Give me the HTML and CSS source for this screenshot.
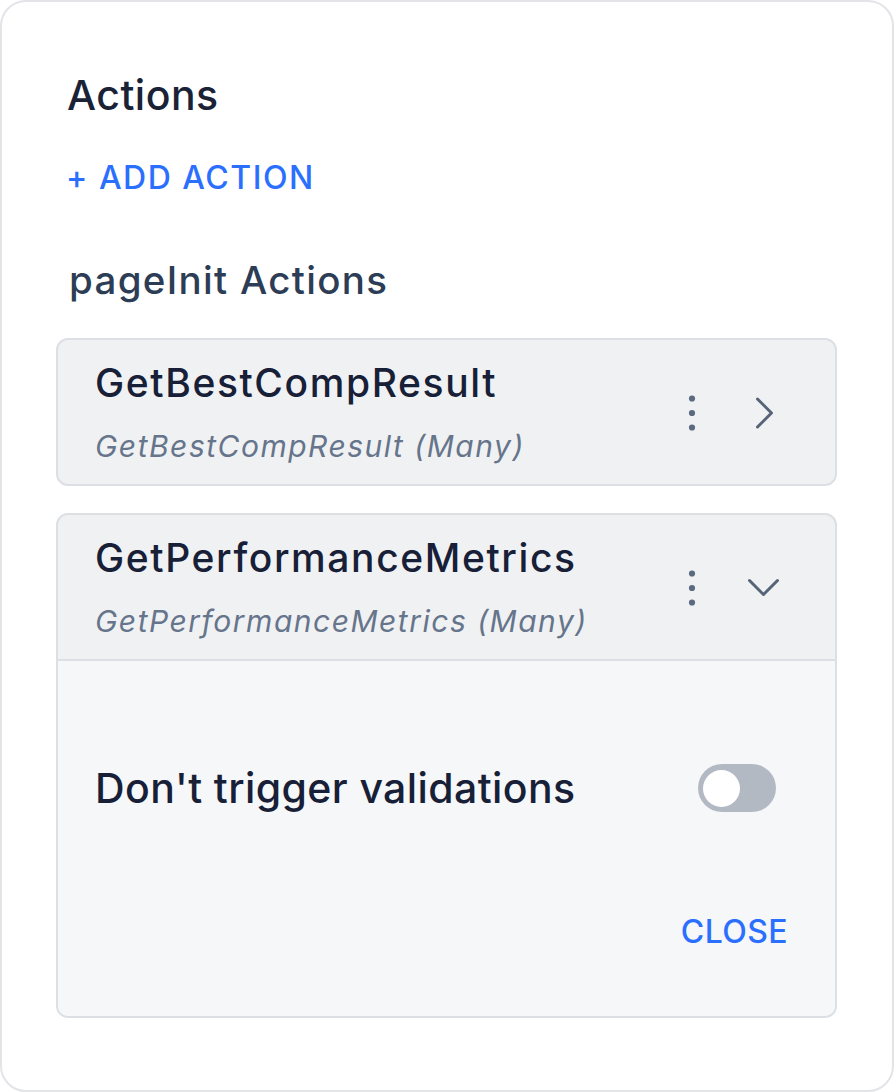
FILE: index.html
```html
<!DOCTYPE html>
<html>
<head>
<meta charset="utf-8">
<link rel="stylesheet" href="styles.css">
</head>
<body>
<div class="panel">
  <h1 class="title">Actions</h1>
  <div class="add-action">+ ADD ACTION</div>
  <h2 class="section">pageInit Actions</h2>

  <div class="card">
    <div class="card-head">
      <div class="card-text">
        <div class="card-title">GetBestCompResult</div>
        <div class="card-sub">GetBestCompResult (Many)</div>
      </div>
      <div class="card-actions">
        <svg class="kebab" width="20" height="40" viewBox="0 0 20 40"><circle cx="10" cy="5.5" r="3.1"/><circle cx="10" cy="20" r="3.1"/><circle cx="10" cy="34.5" r="3.1"/></svg>
        <svg class="chev" width="40" height="40" viewBox="0 0 40 40"><path d="M13.5 6 L27.5 20 L13.5 34"/></svg>
      </div>
    </div>
  </div>

  <div class="card open">
    <div class="card-head">
      <div class="card-text">
        <div class="card-title">GetPerformanceMetrics</div>
        <div class="card-sub">GetPerformanceMetrics (Many)</div>
      </div>
      <div class="card-actions">
        <svg class="kebab" width="20" height="40" viewBox="0 0 20 40"><circle cx="10" cy="5.5" r="3.1"/><circle cx="10" cy="20" r="3.1"/><circle cx="10" cy="34.5" r="3.1"/></svg>
        <svg class="chev" width="40" height="40" viewBox="0 0 40 40"><path d="M5.5 12.5 L19.5 26.5 L33.5 12.5"/></svg>
      </div>
    </div>
    <div class="card-body">
      <div class="toggle-row">
        <span class="toggle-label">Don't trigger validations</span>
        <span class="toggle"><span class="knob"></span></span>
      </div>
      <div class="close-row">
        <span class="close">CLOSE</span>
      </div>
    </div>
  </div>
</div>
</body>
</html>
```

FILE: styles.css
```css
* { box-sizing: border-box; }
html, body { margin: 0; padding: 0; background: #ffffff; }
body { font-family: Inter, "Noto Sans", sans-serif; }

.panel {
  width: 894px;
  height: 1092px;
  border: 2px solid #e2e4e8;
  border-radius: 26px;
  background: #ffffff;
  padding: 69px 55px 0 54px;
}

.title {
  margin: 0;
  padding-left: 11px;
  font-size: 41px;
  line-height: 48px;
  font-weight: 500;
  letter-spacing: 0.5px;
  color: #1a2236;
}

.add-action {
  margin-top: 39px;
  padding-left: 10px;
  font-size: 32px;
  line-height: 40px;
  font-weight: 500;
  letter-spacing: 1.5px;
  color: #2b6fff;
}

.section {
  margin: 61px 0 0 0;
  padding-left: 13px;
  font-size: 38.5px;
  line-height: 42px;
  font-weight: 500;
  letter-spacing: 1.3px;
  color: #2c3d55;
}

.card {
  margin-top: 37px;
  border: 2px solid #dcdfe4;
  border-radius: 12px;
  background: #f0f1f3;
  overflow: hidden;
}
.card + .card { margin-top: 27px; }

.card-head {
  display: flex;
  align-items: center;
  justify-content: space-between;
  padding: 21px 51px 20px 37px;
}
.open .card-head { border-bottom: 2px solid #dcdfe4; }

.card-title {
  font-size: 39px;
  line-height: 44px;
  font-weight: 500;
  letter-spacing: 1.6px;
  color: #172037;
}
.card-sub {
  margin-top: 23px;
  font-size: 30px;
  line-height: 36px;
  font-style: italic;
  letter-spacing: 1.5px;
  color: #66758b;
}

.card-actions {
  display: flex;
  align-items: center;
  gap: 42px;
}
.kebab { fill: #5b6a7f; display: block; }
.chev { display: block; fill: none; stroke: #566477; stroke-width: 3; stroke-linecap: round; stroke-linejoin: round; }

.card-body {
  background: #f6f7f9;
  padding: 103px 47px 64px 37px;
}
.toggle-row {
  display: flex;
  align-items: center;
  justify-content: space-between;
  padding-right: 12px;
}
.toggle-label {
  font-size: 41px;
  line-height: 48px;
  font-weight: 500;
  letter-spacing: 0.4px;
  color: #172037;
}
.toggle {
  position: relative;
  width: 78px;
  height: 48px;
  border-radius: 24px;
  background: #b3b9c3;
}
.knob {
  position: absolute;
  left: 5px;
  top: 5.5px;
  width: 37px;
  height: 37px;
  border-radius: 50%;
  background: #ffffff;
}
.close-row {
  display: flex;
  justify-content: flex-end;
  margin-top: 100px;
}
.close {
  font-size: 32px;
  line-height: 40px;
  font-weight: 500;
  letter-spacing: 0.4px;
  color: #2b6fff;
}
```
